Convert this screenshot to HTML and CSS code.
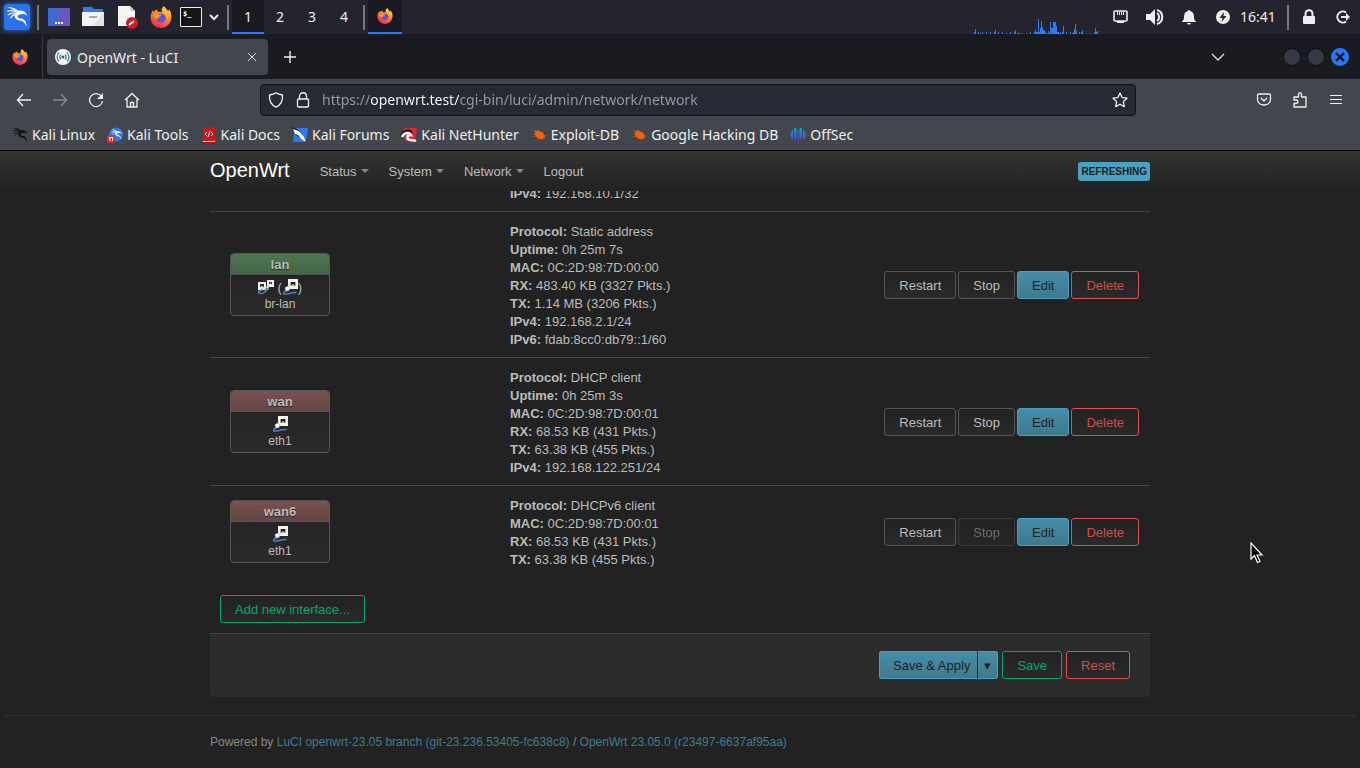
FILE: index.html
```html
<!DOCTYPE html>
<html lang="en">
<head>
    <meta charset="UTF-8">
    <title>OpenWrt - LuCI</title>
    <meta name="viewport" content="width=device-width, initial-scale=1.0">
    <link rel="stylesheet" href="styles.css">
</head>
<body>
    <!-- shapes used more than once -->
    <svg class="defs" width="0" height="0" aria-hidden="true">
        <defs>
            <linearGradient id="fire" x1="0.8" y1="0" x2="0.3" y2="1">
                <stop offset="0" stop-color="#ffe14a"/>
                <stop offset="0.45" stop-color="#ff8a2a"/>
                <stop offset="1" stop-color="#f0245c"/>
            </linearGradient>
            <linearGradient id="desk" x1="0" y1="0" x2="1" y2="0">
                <stop offset="0" stop-color="#2d6fe0"/>
                <stop offset="1" stop-color="#7c4fb0"/>
            </linearGradient>
            <linearGradient id="offsec" x1="0" y1="0" x2="0" y2="1">
                <stop offset="0" stop-color="#16a3c4"/>
                <stop offset="1" stop-color="#6a2bd0"/>
            </linearGradient>
        </defs>
        <symbol id="firefox" viewBox="0 0 22 22">
            <path fill="url(#fire)" d="M14 0c1 2 3 3 4 5 1-.5 1-1 1-2 2 3 2.600 6 2.400 8.500C21 17.500 16.500 22 11 22 5 22 .6 17.500.6 11.500.6 8.500 1.500 6 3.200 4c0 1 .3 1.600.8 2 1-1.500 2-2.300 3.500-2.500-.4 1 0 2 .7 2.500 1.500-.5 2.800-.3 4 .2C11 4 12 1.500 14 0z"/>
            <circle cx="11" cy="12" r="4.600" fill="#5b55d8"/>
            <path fill="#ff9a22" d="M3.500 9C5 7.500 7 7.500 8.500 8.500l3 .3c-.5 1.500-2 1.500-2.500 2.200-.3 1.600-1.500 2-3 1.500C5 12 4 10.500 3.500 9z"/>
            <path fill="#fdbb2e" d="M13.500 7c3 1 4.500 3.500 3 7 2.500-2 3-6 0-8.500-1-.5-2.500 0-3 1.500z"/>
        </symbol>
        <symbol id="dragon" viewBox="0 0 24 24">
            <path fill="currentColor" d="M1 1c5-.2 9 1 12 4 3-.4 6.500.2 8 2l2.500 3.500L20 8.800l-4 .2c-3 .4-4 1.800-3 3.200 1 1.300 3 .8 5 1.800 3 1.500 4.500 4.500 4.500 9-1.500-3.500-3-6-6-6.800-3-.6-6-1.200-6.800-4C9 10 10 8 12 6.600 9 4 5 2.500 1 1z"/>
            <path fill="none" stroke="currentColor" stroke-width="1.300" stroke-linecap="round" d="M2 5.500c3-.8 6-.6 9 1M2.500 9.500c2.500-1.800 5-2.200 8-1.600M5 13c1-2 2.500-3.200 5-3.800"/>
        </symbol>
        <symbol id="exploit" viewBox="0 0 16 16">
            <path fill="#f2610f" d="M2.500 3.500L6 4l2-.5 2 1.500 2 .5 1 2.500 2.500 1-2 .8.500 2-2-.6-1 1.800-2-1.500-2 .8-.5-1.800L4 9.500l1-1.300L2.500 7.500 4.500 6z"/>
            <path stroke="#a84e1c" fill="none" d="M2.500 3.500L1.500 2M7 4l-1-2M3.500 9.500h-2"/>
        </symbol>
        <symbol id="port" viewBox="0 0 16 16">
            <path fill="#f4f4ee" d="M6 0h10v10H6z"/>
            <path fill="#a8a89e" d="M8 3h6v4H8z"/>
            <path fill="#1c1c14" d="M9 3h4v3H9z"/>
            <path fill="#b8a52c" d="M10 5h2v1h-2z"/>
            <path fill="#fff" stroke="#999" stroke-width=".6" d="M3 8.500L6 7l2 2-1 2.500-3.500 1z"/>
            <path fill="none" stroke="#4a82c8" stroke-width="1.500" d="M4.500 11.500c-4 2-4 4 0 3.500s5-1.800 10-1.500"/>
        </symbol>
        <symbol id="bridge" viewBox="0 0 16 16">
            <path fill="#f4f4ee" d="M0 3h8v8H0zM9 1h7v7H9z"/>
            <path fill="#34342a" d="M2 5h4v3H2zM11 3h3v2h-3z"/>
            <path fill="#d8c850" d="M3 7h2v1H3zM12 4h1v1h-1z"/>
            <path fill="#fff" stroke="#999" stroke-width=".6" d="M4 9h3v2H4zM9 7l2 1-1 2-2-1z"/>
            <path fill="none" stroke="#4a82c8" stroke-width="1.500" d="M4 11c-5 1-4 3.500-1 3.500 4 0 4-3.500 8-4.500"/>
        </symbol>
    </svg>

    <div class="panel">
        <button class="cell kali" aria-label="Applications"><svg width="26" height="26" viewBox="0 0 26 26"><rect width="26" height="26" rx="2" fill="#2a72f0"/><g color="#fff"><use href="#dragon" x="2" y="1" width="22" height="24"/></g></svg></button>
        <span class="sep"></span>
        <button class="cell" aria-label="Show desktop"><svg width="24" height="18"><rect x="1" width="22" height="18" rx="1" fill="url(#desk)"/><path stroke="#fff" stroke-width="2" stroke-dasharray="2 1" d="M8 15h8"/></svg></button>
        <button class="cell" aria-label="Files"><svg width="24" height="22"><path fill="#2f7bea" d="M2 1h9l2 2h9v6H2z"/><path fill="#f2f2f2" d="M1 6h22v14H1z"/><path fill="#e2e2e2" d="M23 6v14H11z"/><path stroke="#aaa" stroke-width="2" d="M8 11h8"/></svg></button>
        <button class="cell" aria-label="Text editor"><svg width="24" height="24"><path fill="#f4f4f4" d="M3 1h12l5 5v15H3z"/><path fill="#ccc" d="M15 1v5h5z"/><circle cx="17" cy="18" r="6" fill="#d01c22"/><path stroke="#fff" stroke-width="2" d="M14 20l5-4"/></svg></button>
        <button class="cell" aria-label="Firefox"><svg width="22" height="22"><use href="#firefox"/></svg></button>
        <button class="cell term" aria-label="Terminal"><span>$_</span></button>
        <button class="cell arrow" aria-label="More launchers"><svg width="10" height="8"><path d="M1 2l4 4 4-4" fill="none" stroke="#eee" stroke-width="2"/></svg></button>
        <span class="sep"></span>
        <button class="space active">1</button>
        <button class="space">2</button>
        <button class="space">3</button>
        <button class="space">4</button>
        <span class="sep"></span>
        <button class="cell task" aria-label="OpenWrt - LuCI window"><svg width="16" height="16"><use href="#firefox"/></svg></button>

        <svg class="graph" width="124" height="16"><path fill="#2c7bf2" d="M0 14h1v-3h1v5H0zM4 14h1v2H4zM6 15h1v1H6zM8 14h1v2H8zM12 14h1v2h-1zM16 14h1v2h-1zM20 14h1v-2h1v4h-2zM24 14h1v2h-1zM28 14h1v2h-1zM32 15h1v1h-1zM36 14h1v2h-1zM40 14h1v-2h1v4h-2zM43 15h3v1h-3zM48 15h1v1h-1zM52 15h1v1h-1zM56 14h1v2h-1zM60 14h1v-2h1v2h2V1h1v13h1v-4h1V3h1v6h1v3h2v2h1v2H60zM73 15h1v-2h1v2h1V4h1v6h2V4h3v4h1v6h2v2H73zM85 15h1v-1h1v2h-2zM88 14h1V8h1v8h-2zM92 14h1v2h-1zM96 14h1v2h-1zM98 15h1v-1h1v-3h1V6h1v7h1v3h-5zM105 14h1v2h-1zM108 12h1v4h-2v-2h1zM112 15h1v1h-1zM116 15h1v1h-1zM120 14h1v-4h1v4h1v-1h1v3h-4z"/></svg>
        <button class="cell" aria-label="Network"><svg width="16" height="14"><rect x="1" y="1" width="13" height="10" rx="1" fill="none" stroke="#eee" stroke-width="1.600"/><path stroke="#eee" d="M4.500 2v3M6.500 2v3M8.500 2v3M10.500 2v3"/><path fill="#eee" d="M4 11h7v2H4z"/></svg></button>
        <button class="cell" aria-label="Volume"><svg width="18" height="18"><path fill="#eee" d="M0 6h4l5-5v16l-5-5H0z"/><path fill="none" stroke="#eee" stroke-width="2" d="M11 5c3 2 3 6 0 8M11 2c7 2 7 12 0 14"/></svg></button>
        <button class="cell" aria-label="Notifications"><svg width="16" height="16"><path fill="#eee" d="M8 1c1 0 1 .5 1 1 3 .6 4 3 4 6 0 2.500.6 3.500 2 4.500V13H1v-.5C2.400 11.500 3 10.500 3 8c0-3 1-5.400 4-6 0-.5 0-1 1-1zM6 14h4c-.5 2-3.500 2-4 0z"/></svg></button>
        <button class="cell" aria-label="Power"><svg width="14" height="14"><circle cx="7" cy="7" r="7" fill="#eee"/><path fill="#23242d" d="M8 2L3.500 8H6.500L5.500 12 10.500 6H7.500z"/></svg></button>
        <time class="clock">16:41</time>
        <span class="sep"></span>
        <button class="cell" aria-label="Lock screen"><svg width="14" height="16"><rect x="1" y="7" width="12" height="8" rx="1" fill="#eee"/><path fill="none" stroke="#eee" stroke-width="2" d="M3.500 8V5c0-5 7-5 7 0v3"/></svg></button>
        <button class="cell" aria-label="Log out"><svg width="16" height="14"><path fill="none" stroke="#eee" stroke-width="2" d="M11 2.500A5.500 5.500 0 1 0 11 11.500M6 7h7"/><path fill="#eee" d="M11 3l4 4-4 4z"/></svg></button>
    </div>

    <div class="tabs">
        <span class="tabs-view"><svg width="16" height="16"><use href="#firefox"/></svg></span>
        <div class="tab">
            <svg width="16" height="16"><circle cx="8" cy="8" r="8" fill="#f4f6f8"/><circle cx="8" cy="8" r="1.500" fill="#1c6a86"/><path fill="none" stroke="#3b8299" stroke-width="1.200" d="M6 5.500c-1.500 1.500-1.500 3.500 0 5M10 5.500c1.500 1.500 1.500 3.500 0 5M4 3.500c-2.500 2.500-2.500 6.500 0 9M12 3.500c2.500 2.500 2.500 6.500 0 9"/></svg>
            <span class="tab-title">OpenWrt - LuCI</span>
            <button aria-label="Close tab"><svg width="10" height="10"><path stroke="#ddd" d="M1 1l8 8M9 1L1 9"/></svg></button>
        </div>
        <button class="new-tab" aria-label="New tab"><svg width="12" height="12"><path stroke="#f0f0f0" stroke-width="1.400" d="M6 0v12M0 6h12"/></svg></button>
        <button class="list-tabs" aria-label="List all tabs"><svg width="14" height="8"><path fill="none" stroke="#ddd" stroke-width="1.300" d="M1 1l6 6 6-6"/></svg></button>
        <button class="win" aria-label="Minimize"></button>
        <button class="win" aria-label="Maximize"></button>
        <button class="win close" aria-label="Close"><svg width="10" height="10"><path stroke="#10131c" stroke-width="2.400" d="M1 1l8 8M9 1L1 9"/></svg></button>
    </div>

    <div class="toolbar">
        <button class="tool" aria-label="Back"><svg width="16" height="16"><path class="line" d="M15 8H1.500M7 2L1.500 8 7 14"/></svg></button>
        <button class="tool off" aria-label="Forward" disabled><svg width="16" height="16"><path class="line" d="M1 8h13.500M9 2l5.500 6L9 14"/></svg></button>
        <button class="tool" aria-label="Reload"><svg width="16" height="16"><path class="line" d="M13.500 4.500A6.500 6.500 0 1 0 14.500 9"/><path fill="#f0f0f0" d="M15 1v6H9z"/></svg></button>
        <button class="tool" aria-label="Home"><svg width="16" height="16"><path class="line" d="M1 8l7-6.500L15 8M3 7v8h10V7M6.500 15v-4.500h3V15"/></svg></button>
        <div class="urlbar">
            <svg width="16" height="16"><path class="line" d="M8 .8c2 1.400 4.500 1.900 6.500 2.200C15 9 12.500 13 8 15.200 3.500 13 1 9 1.500 3 3.500 2.700 6 2.200 8 .8z"/></svg>
            <svg width="14" height="16"><path class="line" d="M3.500 7V4.500c0-5 7-5 7 0V7"/><rect class="line" x="1.500" y="7" width="11" height="8" rx="1"/></svg>
            <input type="text" aria-label="Address" value="https://openwrt.test/cgi-bin/luci/admin/network/network">
            <svg width="16" height="16"><path class="line" d="M8 1l2.100 4.600 4.900.6-3.600 3.400.9 5L8 12.200l-4.300 2.400.9-5L1 6.200l4.900-.6z"/></svg>
        </div>
        <button class="tool" aria-label="Save to Pocket"><svg width="16" height="16"><path class="line" d="M3 2h10q1.500 0 1.500 1.500V7c0 8-13 8-13 0V3.500Q1.500 2 3 2zM5 6l3 3 3-3"/></svg></button>
        <button class="tool" aria-label="Extensions"><svg width="16" height="18"><path class="line" d="M2 6h4.500V3.500c0-2.500 3-2.500 3 0V6H14v10H2v-3.500h2c2.500 0 2.500-3.500 0-3.500H2z"/></svg></button>
        <button class="tool" aria-label="Menu"><svg width="14" height="12"><path stroke="#f0f0f0" d="M1 1.500h12M1 5.500h12M1 9.500h12"/></svg></button>
    </div>

    <nav class="bookmarks">
        <a href="#"><svg width="16" height="16" color="#111"><use href="#dragon"/></svg>Kali Linux</a>
        <a href="#"><svg width="16" height="16" color="#fff"><circle cx="9" cy="7.500" r="7" fill="#2a76ea"/><use href="#dragon" x="4" y="2" width="11" height="11"/><rect y="8" width="8" height="8" rx="3" fill="#e02c2c"/><path stroke="#fff" d="M2 10.500h4M3 10v4M5.500 10v4"/></svg>Kali Tools</a>
        <a href="#"><svg width="16" height="16"><path fill="#cf1420" d="M2 0h12v14H2z"/><path fill="#ddd" d="M2 14h12v1H2z"/><path fill="#900" d="M2 15h12v1H2z"/><path fill="none" stroke="#fff" d="M6 5L4 7l2 2M10 5l2 2-2 2M9 4L7 10"/></svg>Kali Docs</a>
        <a href="#"><svg width="16" height="16"><path fill="#247fee" d="M3 1h13l-2 14H1z"/><path fill="#111" d="M0 0l7 3 6 9 2 4-6-4L3 7z"/><path fill="#fff" d="M1 2l6 2 5 6 2 5-5-3-3-4-3-1z"/></svg>Kali Forums</a>
        <a href="#"><svg width="16" height="16"><path fill="#e0262f" d="M3 1h13l-2 13H4z"/><path fill="none" stroke="#111" stroke-width="4" d="M1 9c2-5 8-6 9-2"/><path fill="none" stroke="#fff" stroke-width="2.500" d="M1 10c2-5 8-5 9-2-4-1-5 5-1 5 2 .5 4 0 6 1"/></svg>Kali NetHunter</a>
        <a href="#"><svg width="16" height="16"><use href="#exploit"/></svg>Exploit-DB</a>
        <a href="#"><svg width="16" height="16"><use href="#exploit"/></svg>Google Hacking DB</a>
        <a href="#"><svg width="16" height="16"><path fill="url(#offsec)" d="M3 2.500v11C-.5 10.500-.5 5.500 3 2.500zM4 1.500L6.500.5V13L4 12zM9.500.5l2.500 1V12l-2.500 1zM13 2.500c3.500 3 3.500 8 0 11zM7.500 3h1v13h-1z"/></svg>OffSec</a>
    </nav>

    <div class="page">
        <header>
            <div class="container">
                <a class="brand" href="#">OpenWrt</a>
                <ul class="nav">
                    <li><a class="menu" href="#">Status</a></li>
                    <li><a class="menu" href="#">System</a></li>
                    <li><a class="menu" href="#">Network</a></li>
                    <li><a href="#">Logout</a></li>
                </ul>
                <button class="label">Refreshing</button>
            </div>
        </header>

        <main class="container">
            <table class="interfaces">
                <tr>
                    <td></td>
                    <td><strong>IPv4:</strong> 192.168.10.1/32</td>
                    <td></td>
                </tr>
                <tr>
                    <td>
                        <div class="ifacebox">
                            <div class="ifacebox-head lan">lan</div>
                            <div class="ifacebox-body">
                                <div class="icons"><svg width="16" height="16"><use href="#bridge"/></svg> (<svg width="16" height="16"><use href="#port"/></svg>)</div>
                                <small>br-lan</small>
                            </div>
                        </div>
                    </td>
                    <td>
                        <strong>Protocol:</strong> Static address<br>
                        <strong>Uptime:</strong> 0h 25m 7s<br>
                        <strong>MAC:</strong> 0C:2D:98:7D:00:00<br>
                        <strong>RX:</strong> 483.40 KB (3327 Pkts.)<br>
                        <strong>TX:</strong> 1.14 MB (3206 Pkts.)<br>
                        <strong>IPv4:</strong> 192.168.2.1/24<br>
                        <strong>IPv6:</strong> fdab:8cc0:db79::1/60
                    </td>
                    <td>
                        <div class="actions">
                            <button class="btn">Restart</button>
                            <button class="btn">Stop</button>
                            <button class="btn fill">Edit</button>
                            <button class="btn negative">Delete</button>
                        </div>
                    </td>
                </tr>
                <tr>
                    <td>
                        <div class="ifacebox">
                            <div class="ifacebox-head wan">wan</div>
                            <div class="ifacebox-body">
                                <div class="icons"><svg width="16" height="16"><use href="#port"/></svg></div>
                                <small>eth1</small>
                            </div>
                        </div>
                    </td>
                    <td>
                        <strong>Protocol:</strong> DHCP client<br>
                        <strong>Uptime:</strong> 0h 25m 3s<br>
                        <strong>MAC:</strong> 0C:2D:98:7D:00:01<br>
                        <strong>RX:</strong> 68.53 KB (431 Pkts.)<br>
                        <strong>TX:</strong> 63.38 KB (455 Pkts.)<br>
                        <strong>IPv4:</strong> 192.168.122.251/24
                    </td>
                    <td>
                        <div class="actions">
                            <button class="btn">Restart</button>
                            <button class="btn">Stop</button>
                            <button class="btn fill">Edit</button>
                            <button class="btn negative">Delete</button>
                        </div>
                    </td>
                </tr>
                <tr>
                    <td>
                        <div class="ifacebox">
                            <div class="ifacebox-head wan">wan6</div>
                            <div class="ifacebox-body">
                                <div class="icons"><svg width="16" height="16"><use href="#port"/></svg></div>
                                <small>eth1</small>
                            </div>
                        </div>
                    </td>
                    <td>
                        <strong>Protocol:</strong> DHCPv6 client<br>
                        <strong>MAC:</strong> 0C:2D:98:7D:00:01<br>
                        <strong>RX:</strong> 68.53 KB (431 Pkts.)<br>
                        <strong>TX:</strong> 63.38 KB (455 Pkts.)
                    </td>
                    <td>
                        <div class="actions">
                            <button class="btn">Restart</button>
                            <button class="btn" disabled>Stop</button>
                            <button class="btn fill">Edit</button>
                            <button class="btn negative">Delete</button>
                        </div>
                    </td>
                </tr>
            </table>
            <div class="create">
                <button class="btn add">Add new interface...</button>
            </div>
            <div class="page-actions">
                <div class="split">
                    <button class="btn fill">Save &amp; Apply</button>
                    <button class="btn fill more" aria-label="More apply options">▾</button>
                </div>
                <button class="btn add">Save</button>
                <button class="btn negative">Reset</button>
            </div>
        </main>

        <footer>
            <div class="container">
                <span>Powered by <a href="#">LuCI openwrt-23.05 branch (git-23.236.53405-fc638c8)</a> / <a href="#">OpenWrt 23.05.0 (r23497-6637af95aa)</a></span>
            </div>
        </footer>
    </div>

    <svg class="cursor" width="14" height="22"><path fill="#000" stroke="#fff" stroke-width="1.200" d="M1 1v16l3.500-3.500 3 7 2.500-1-3-6.500h5z"/></svg>
</body>
</html>
```

FILE: styles.css
```css
* {
    box-sizing: border-box;
}
body {
    margin: 0;
    min-height: 100vh;
    display: flex;
    flex-direction: column;
    background: #222;
    color: #eee;
    font: 14px/20px "Noto Sans", sans-serif;
}
svg {
    display: block;
    flex: none;
}
button {
    padding: 0;
    border: 0;
    background: none;
    color: inherit;
    font: inherit;
}
a {
    color: inherit;
    text-decoration: none;
}
.defs {
    position: absolute;
}
.line {
    fill: none;
    stroke: #f0f0f0;
    stroke-width: 1.3;
    stroke-linejoin: round;
}

/* desktop panel */
.panel {
    display: flex;
    height: 35px;
    background: #23242d;
    border-bottom: 1px solid #1b1c23;
}
.cell {
    width: 34px;
    display: flex;
    align-items: center;
    justify-content: center;
}
.kali svg {
    border-radius: 3px;
    box-shadow: 0 0 5px #2a72f0;
}
.sep {
    width: 2px;
    height: 25px;
    margin: 5px 3px;
    background: #77787c;
}
.term {
    width: 26px;
}
.term span {
    width: 22px;
    height: 20px;
    padding-left: 2px;
    border: 1px solid #eee;
    border-radius: 1px;
    background: #161616;
    color: #fff;
    font: bold 7px/12px "DejaVu Sans Mono", monospace;
    text-align: left;
}
.arrow {
    width: 20px;
}
.space {
    width: 32px;
    padding-top: 2px;
    border-bottom: 2px solid transparent;
}
.space.active {
    background: #1a1b22;
    border-color: #2777ff;
}
.task {
    background: #1a1b22;
    border-bottom: 2px solid #2777ff;
}
.graph {
    margin: 18px 6px 0 auto;
}
.clock {
    width: 44px;
    line-height: 33px;
}

/* browser window */
.tabs {
    display: flex;
    align-items: center;
    height: 44px;
    padding-right: 11px;
    background: #1a1b20;
}
.tabs-view {
    display: flex;
    align-items: center;
    justify-content: center;
    width: 43px;
    height: 44px;
    margin-right: 4px;
    padding-right: 2px;
    border-right: 1px solid #3a3b40;
}
.tab {
    display: flex;
    align-items: center;
    width: 221px;
    height: 36px;
    padding: 0 11px 0 8px;
    border-radius: 4px;
    background: #43464e;
}
.tab-title {
    flex: 1;
    margin-left: 6px;
    padding-top: 1px;
}
.new-tab {
    margin-left: 16px;
}
.list-tabs {
    margin: 0 58px 0 auto;
}
.win {
    display: flex;
    align-items: center;
    justify-content: center;
    width: 18px;
    height: 18px;
    margin-right: 6px;
    border: 1px solid #0b0c10;
    border-radius: 50%;
    background: #353945;
}
.win.close {
    margin-right: 0;
    border-color: #2777ff;
    background: #2777ff;
}
.toolbar {
    display: flex;
    align-items: center;
    height: 41px;
    padding: 0 6px;
    background: #43464d;
}
.tool {
    display: flex;
    align-items: center;
    justify-content: center;
    width: 36px;
    height: 36px;
}
.off {
    opacity: 0.4;
}
.urlbar {
    flex: 1;
    display: flex;
    align-items: center;
    gap: 12px;
    height: 32px;
    margin: 0 110px;
    padding: 0 7px;
    border: 1px solid #101116;
    border-radius: 4px;
    background: #272934;
}
/* the host part of the address is brighter than the rest */
.urlbar input {
    flex: 1;
    min-width: 0;
    padding: 0;
    border: 0;
    background: linear-gradient(90deg, #9a9ba0 49px, #fff 49px, #fff 137px, #9a9ba0 137px);
    -webkit-background-clip: text;
    background-clip: text;
    color: transparent;
    font: inherit;
}
.bookmarks {
    display: flex;
    gap: 12px;
    height: 31px;
    padding: 0 12px;
    border-bottom: 1px solid #0c0c0e;
    background: #43464d;
}
.bookmarks a {
    display: flex;
    align-items: center;
    gap: 4px;
    white-space: nowrap;
}

/* LuCI */
.page {
    flex: 1;
    color: #bbb;
    font: 13px/18px "Liberation Sans", Arial, sans-serif;
}
.container {
    width: 100%;
    max-width: 940px;
    margin: 0 auto;
}
header {
    position: relative;
    height: 40px;
    background: linear-gradient(#333, #222);
}
header .container {
    display: flex;
    align-items: center;
    height: 40px;
}
.brand {
    padding-bottom: 2px;
    color: #fff;
    font-size: 20px;
}
.nav {
    display: flex;
    gap: 20px;
    margin: 0 auto 0 30px;
    padding: 2px 0 0;
    list-style: none;
}
.menu::after {
    content: "";
    display: inline-block;
    margin-left: 4px;
    vertical-align: 3px;
    border: 4px solid transparent;
    border-top-color: #888;
    border-bottom: 0;
}
.label {
    padding: 0 3px;
    border-radius: 3px;
    background: #4aa0c0;
    color: #222;
    font-size: 10px;
    line-height: 19px;
    font-weight: bold;
    text-transform: uppercase;
}
/* the list is scrolled, its first row goes under the header */
.interfaces {
    width: 100%;
    margin-top: -18px;
    border-spacing: 0;
}
.interfaces td {
    padding: 11px 10px 8px;
    border-top: 1px solid #444;
}
.interfaces td:first-child {
    width: 290px;
    padding: 9px 10px 9px 20px;
}
.interfaces td:last-child {
    padding: 10px 10px 9px;
}
.actions {
    display: flex;
    justify-content: flex-end;
    gap: 2px;
    padding-right: 1px;
}
.btn {
    height: 28px;
    padding: 2px 14px 0;
    border: 1px solid #555;
    border-radius: 3px;
    background: linear-gradient(#222, #2a2a2a);
    color: #bbb;
}
.btn:disabled {
    opacity: 0.5;
}
.btn.fill {
    border-color: #4aa0c0;
    background: linear-gradient(#468da9, #3e7a8c);
    color: #222;
}
.btn.add {
    border-color: #00a86b;
    color: #00a86b;
}
.btn.negative {
    border-color: #d9534f;
    color: #c94f4c;
}
.ifacebox {
    width: 100px;
    overflow: hidden;
    border: 1px solid #555;
    border-radius: 4px;
    background: linear-gradient(#222, #2a2a2a);
    text-align: center;
}
.ifacebox-head {
    height: 21px;
    border-bottom: 1px solid #555;
    line-height: 22px;
    font-weight: bold;
    text-shadow: 0 1px 1px #222;
}
.lan {
    background: linear-gradient(#4d7650, #466549);
}
.wan {
    background: linear-gradient(#795050, #634646);
}
.ifacebox-body {
    height: 40px;
    padding-top: 4px;
}
.icons {
    height: 17px;
    line-height: 17px;
}
.icons svg {
    display: inline-block;
    vertical-align: top;
}
.ifacebox small {
    display: block;
    font-size: 12px;
    line-height: 16px;
}
.create {
    padding: 18px 10px 10px;
}
.page-actions {
    display: flex;
    justify-content: flex-end;
    gap: 4px;
    padding: 17px 20px 18px;
    border-top: 1px solid #444;
    border-radius: 0 0 3px 3px;
    background: #2c2c2c;
}
.split {
    display: flex;
}
.split .btn {
    padding: 2px 7px 0 13px;
    border-right-color: #222;
    border-radius: 3px 0 0 3px;
}
.split .more {
    width: 20px;
    padding: 2px 0 0;
    border-left: 0;
    border-right-color: #4aa0c0;
    border-radius: 0 3px 3px 0;
}
footer {
    margin: 18px 5px 0;
    padding: 17px 0;
    border-top: 1px solid #333;
    color: #888;
    font-size: 12px;
}
footer a {
    color: #3c7d94;
}

.cursor {
    position: absolute;
    left: 1250px;
    top: 542px;
}
```
